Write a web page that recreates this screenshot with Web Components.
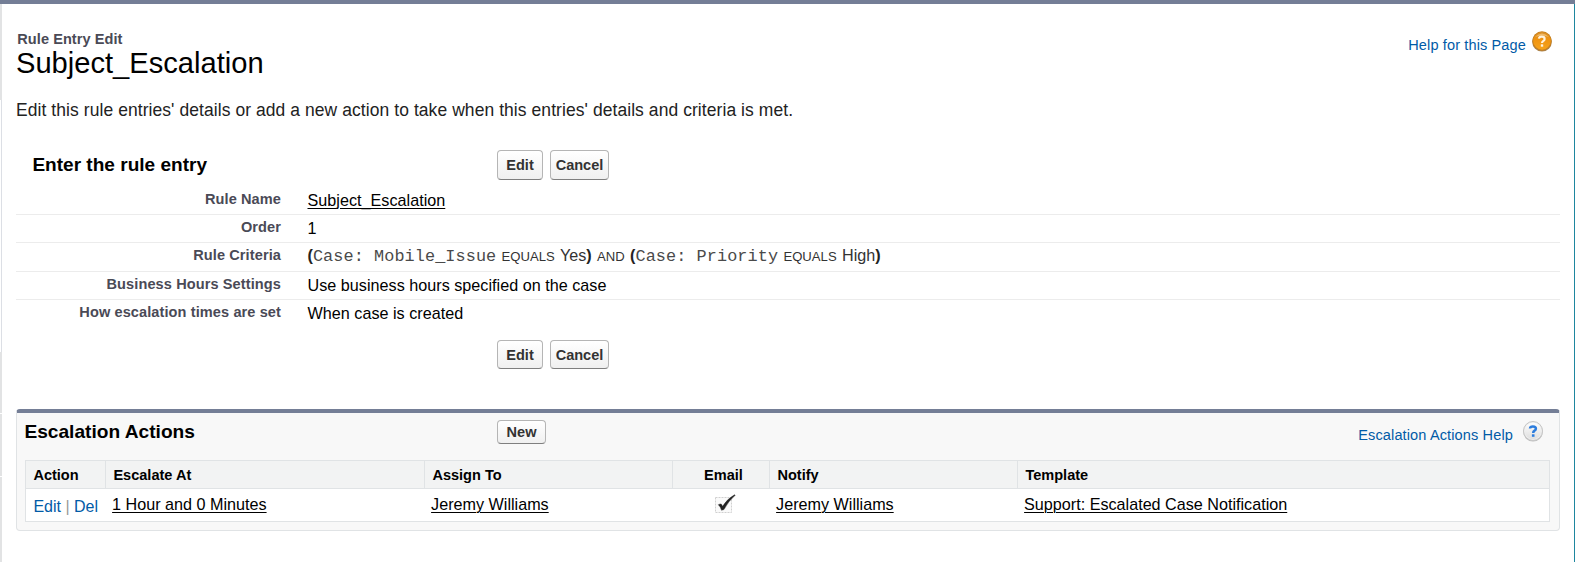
<!DOCTYPE html>
<html lang="en">
<head>
<meta charset="utf-8">
<title>Rule Entry Edit</title>
<style>
html,body{margin:0;height:562px;overflow:hidden;background:#fff}
body{font-family:"Liberation Sans",Arial,sans-serif;color:#000}
</style>
</head>
<body>
<setup-page>
  <page-header kicker="Rule Entry Edit" heading="Subject_Escalation"></page-header>
  <rule-details></rule-details>
  <related-list></related-list>
</setup-page>
<script>
const define=(name,html)=>customElements.define(name,class extends HTMLElement{
  constructor(){
    super();
    const t=document.createElement('template');
    t.innerHTML=html.replace(/\{\{(\w+)\}\}/g,(_,k)=>this.getAttribute(k)||'');
    this.attachShadow({mode:'open'}).append(t.content);
  }
});

define('setup-page',`<style>
:host{display:grid;grid-template-columns:2px 1fr 1px;height:558px;border-top:4px solid #747e96}
.edge{display:flex;flex-direction:column}
.edge i{display:block;box-sizing:border-box;background:#e2e3e4}
.edge .line{background:linear-gradient(90deg,#fff 1px,#dcdfe5 1px)}
.edge .gap{height:1px;background:#fff}
main{padding:0 14px;min-width:0;display:flex;flex-direction:column}
.right{background:#1e869f}
</style>
<div class="edge"><i style="height:96px"></i><i class="line" style="height:252px"></i><i style="height:61px"></i><i class="gap"></i><i style="height:62px"></i><i class="gap"></i><i style="flex:1"></i></div>
<main><slot></slot></main><div class="right"></div>`);

define('help-link',`<style>
:host{display:flex;color:#015ba7;font-size:14.56px;line-height:20px}
span{letter-spacing:.12px}
svg{display:block;margin-left:var(--help-gap,6px);margin-top:var(--help-rise,-4px)}
.blue{display:none}
:host([kind=blue]) .blue{display:block}
:host([kind=blue]) .orange{display:none}
</style>
<span><slot></slot></span>
<svg class="orange" width="20" height="21" viewBox="0 0 20 21">
<defs><linearGradient id="o" x1="0" y1="0" x2="0" y2="1"><stop offset="0" stop-color="#d9902a"/><stop offset=".4" stop-color="#ef9310"/><stop offset="1" stop-color="#f5a31c"/></linearGradient></defs>
<circle cx="10" cy="10.8" r="9.8" fill="#a98450"/><circle cx="10" cy="10" r="9.7" fill="#c77f1c"/><circle cx="10" cy="9.9" r="8.8" fill="url(#o)"/>
<path d="M3 6Q10-1 17 6Q10 3 3 6Z" fill="#f5cf93" opacity=".65"/>
<path d="M6.9 7.7Q7.2 5.7 9.7 5.7Q12.6 5.7 12.6 7.9Q12.6 9.1 11.1 10.1Q10 10.8 10 12" fill="none" stroke="#fff2dc" stroke-width="2.2"/><rect x="8.8" y="13.3" width="2.4" height="2.4" fill="#fff2dc"/></svg>
<svg class="blue" width="20" height="21" viewBox="0 0 20 21">
<defs><linearGradient id="b" x1="0" y1="0" x2="0" y2="1"><stop offset="0" stop-color="#fdfdfd"/><stop offset="1" stop-color="#dedede"/></linearGradient></defs>
<circle cx="10" cy="10.8" r="9.8" fill="#bdbdbd"/><circle cx="10" cy="10" r="9.5" fill="#eee" stroke="#c6c6c6"/><circle cx="10" cy="10" r="8.3" fill="url(#b)"/>
<path d="M7 7.5Q7.2 5.4 9.9 5.4Q12.9 5.4 12.9 7.7Q12.9 9 11.3 9.9Q10.2 10.6 10.2 12" fill="none" stroke="#2d7ddd" stroke-width="2.5"/><rect x="8.9" y="13.3" width="2.6" height="2.5" fill="#2d7ddd"/></svg>`);

define('page-header',`<style>
:host{display:block;height:94px}
.top{display:flex;justify-content:space-between;padding-top:24.5px}
.kicker{font-weight:bold;font-size:14.56px;line-height:20px;letter-spacing:.06px;color:#4a4a56;padding-left:1.3px}
h1{margin:0;font-weight:normal;font-size:29.12px;line-height:29px}
help-link{margin:6.5px 8px 0 0}
</style>
<div class="top"><div><div class="kicker">{{kicker}}</div><h1>{{heading}}</h1></div>
<help-link>Help for this Page</help-link></div>`);

define('push-button',`<style>
:host{display:block}
button{display:block;box-sizing:border-box;width:100%;height:100%;padding:0;font:bold 14.56px/20px "Liberation Sans",Arial,sans-serif;color:#333;border:1px solid #b5b5b5;border-bottom-color:#7f7f7f;border-radius:4px;background:linear-gradient(#fff,#f0f0f0)}
</style><button><slot></slot></button>`);

define('button-pair',`<style>
:host{display:flex;gap:7px;height:30px}
.e{width:46px}.c{width:59px}
</style><push-button class="e">Edit</push-button><push-button class="c">Cancel</push-button>`);

define('detail-row',`<style>
:host{display:grid;grid-template-columns:265px 1fr;column-gap:26px;box-sizing:border-box;height:28px;border-bottom:1px solid #ececec}
:host([tall]){height:29px}
:host([last]){border:0}
.l{text-align:right;font-weight:bold;font-size:14.56px;line-height:20px;letter-spacing:.1px;color:#4a4a56;padding-top:2px}
.v{font-size:16.16px;line-height:20px;letter-spacing:.02px;padding:2.5px 0 0 .5px;white-space:nowrap}
</style><div class="l">{{label}}</div><div class="v"><slot></slot></div>`);

define('rule-criteria',`<style>
:host{display:block;color:#333;font-size:16.16px;word-spacing:.8px;margin-top:-1px}
code{font:16.85px/20px "Liberation Mono","Courier New",monospace;word-spacing:0;letter-spacing:.08px;color:#4a4a4a}
small{font-size:13.1px}
b{color:#222}
</style><b>(</b><code>Case: Mobile_Issue</code> <small>EQUALS</small> Yes<b>)</b> <small>AND</small> <b>(</b><code>Case: Priority</code> <small>EQUALS</small> High<b>)</b>`);

define('rule-details',`<style>
:host{display:block;height:311px}
p{margin:0;font-size:17.47px;line-height:24px;letter-spacing:.083px;color:#222}
.bar{display:grid;grid-template-columns:481px 1fr;justify-items:start}
.head{padding-top:28px;height:37px}
h2{margin:0;padding:3px 0 0 16.4px;font-size:19.06px;line-height:24px}
.foot{padding-top:12px}
.foot button-pair{grid-column:2;height:29px}
u{text-underline-offset:2px;text-decoration-thickness:1px}
</style>
<p>Edit this rule entries' details or add a new action to take when this entries' details and criteria is met.</p>
<div class="bar head"><h2>Enter the rule entry</h2><button-pair></button-pair></div>
<detail-row label="Rule Name"><u>Subject_Escalation</u></detail-row>
<detail-row label="Order">1</detail-row>
<detail-row label="Rule Criteria" tall><rule-criteria></rule-criteria></detail-row>
<detail-row label="Business Hours Settings">Use business hours specified on the case</detail-row>
<detail-row label="How escalation times are set" last>When case is created</detail-row>
<div class="bar foot"><button-pair></button-pair></div>`);

define('check-mark',`<style>:host{display:inline-block;margin-left:1px}svg{display:block}</style>
<svg width="21" height="20" viewBox="0 0 21 20"><rect x=".5" y="3.5" width="16" height="15" fill="#fafafa" stroke="#d0d0d0" stroke-dasharray="2 1"/>
<path d="M3.3 10.7Q5.5 9.3 6.5 10.3L7.6 12.3Q12 5 19.5.7L20.2 1.3Q13.5 7 9 15.5L6.5 16.3Q5.5 12.5 3.3 10.7Z" fill="#222" stroke="#222" stroke-width=".4"/></svg>`);

define('related-list',`<style>
:host{display:block;box-sizing:border-box;height:122px;border:1px solid #e0e3e5;border-top:4px solid #747e96;border-radius:4px;background:#f8f8f8;padding:0 9px 0 8px}
.head{display:grid;grid-template-columns:472px 1fr auto;height:47px}
h2{margin:0 0 0 -.6px;font-size:19.15px;line-height:24px;padding-top:7px}
push-button{width:49px;height:24px;margin-top:7px}
help-link{margin:12px 7px 0 0;--help-gap:10px;--help-rise:-4px}
.table{display:grid;grid-template-columns:80px 319px 248px 97px 248px 1fr;border:1px solid #e0e3e5;background:#fff;box-sizing:border-box;height:62px;grid-template-rows:28px 32px}
.th{box-sizing:border-box;background:#f2f3f3;border-right:1px solid #e0e3e5;border-bottom:1px solid #e0e3e5;font-weight:bold;font-size:14.56px;line-height:20px;padding:4px 0 0 7.4px}
.th.z{border-right:0}.c{text-align:center}.th.c{padding-left:5px}
.td{font-size:16.16px;line-height:20px;padding:5px 0 0 6.1px;white-space:nowrap}
.td.a{font-size:16px;padding:8px 0 0 7.4px;color:#015ba7}
.td.a span{color:#999}
u{text-underline-offset:2px;text-decoration-thickness:1px}
</style>
<div class="head"><h2>Escalation Actions</h2><push-button>New</push-button><help-link kind="blue">Escalation Actions Help</help-link></div>
<div class="table">
<div class="th">Action</div><div class="th">Escalate At</div><div class="th">Assign To</div><div class="th c">Email</div><div class="th">Notify</div><div class="th z">Template</div>
<div class="td a">Edit <span>|</span> Del</div><div class="td"><u>1 Hour and 0 Minutes</u></div><div class="td"><u>Jeremy Williams</u></div><div class="td c"><check-mark></check-mark></div><div class="td"><u>Jeremy Williams</u></div><div class="td"><u>Support: Escalated Case Notification</u></div>
</div>`);
</script>
</body>
</html>
